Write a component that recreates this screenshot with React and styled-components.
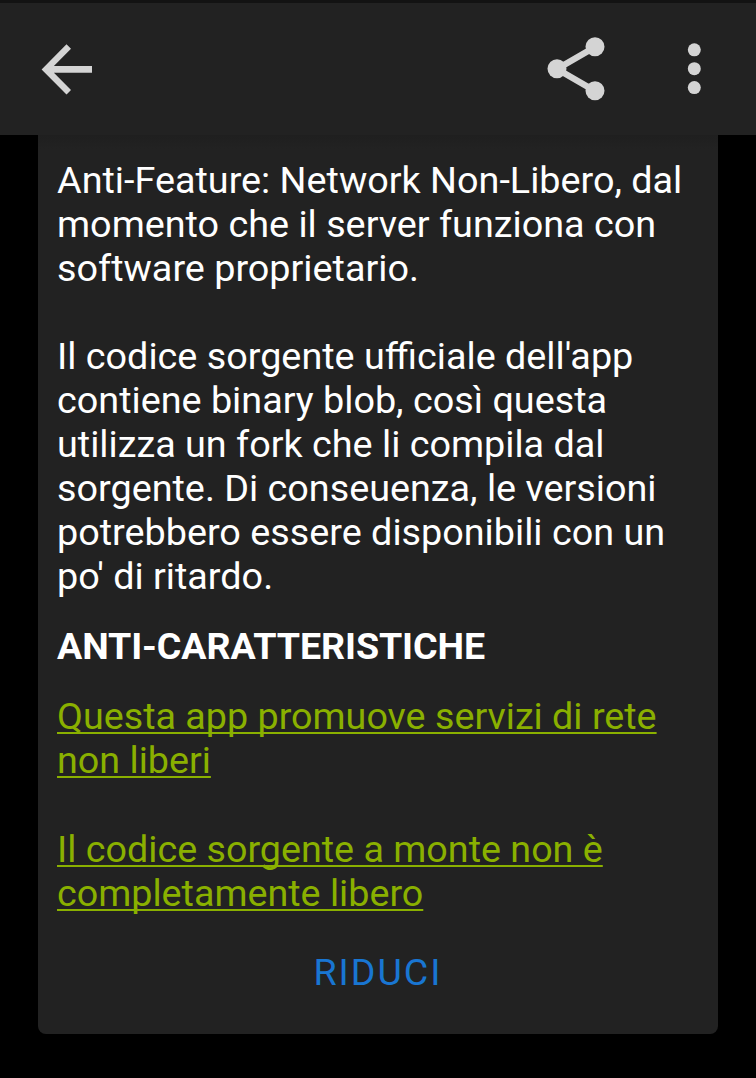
import React from "react";
import styled, { createGlobalStyle } from "styled-components";

const GlobalStyle = createGlobalStyle`
  * { box-sizing: border-box; }
  body { margin: 0; background: #000; font-family: Roboto, "Liberation Sans", sans-serif; }
`;
const Screen = styled.main`
  width: 756px;
  height: 1078px;
  overflow: hidden;
  background: #000;
`;
const Toolbar = styled.header`
  display: flex;
  align-items: center;
  height: 135px;
  padding: 0 55px 1px 41px;
  background: #222;
  border-top: 3px solid #131313;
`;
const IconButton = styled.button`
  display: flex;
  padding: 0;
  border: 0;
  background: none;
  margin-left: ${(p) => p.$gap || "0"};
`;
const Card = styled.article`
  display: flex;
  flex-direction: column;
  width: 680px;
  height: 899px;
  margin: 0 auto;
  padding: 22.5px 19px 0;
  border-radius: 0 0 8px 8px;
  background: linear-gradient(#1f1f1f, #222 14px);
`;
const Paragraph = styled.p`
  margin: 0 0 44px;
  color: #fff;
  font-size: 37.75px;
  line-height: 44.1px;
  white-space: nowrap;
`;
const Heading = styled.h2`
  margin: -18px 0 26px;
  color: #fff;
  font-size: 37.6px;
  letter-spacing: -0.1px;
  line-height: 44px;
  font-weight: 700;
`;
const FeatureLink = styled.a`
  display: block;
  margin-bottom: 44px;
  color: #8ab000;
  font-size: 37.7px;
  line-height: 44.1px;
  white-space: nowrap;
  text-decoration: underline;
  text-decoration-thickness: 2px;
  text-decoration-skip-ink: none;
  text-underline-offset: 3px;
`;
const Collapse = styled.button`
  align-self: center;
  margin-top: -9px;
  padding: 0;
  border: 0;
  background: none;
  color: #1976d2;
  font: 400 37.6px/44px Roboto, sans-serif;
  letter-spacing: 2px;
`;

export default function App() {
  return (
    <Screen>
      <GlobalStyle />
      <Toolbar>
        <IconButton aria-label="Indietro">
          <svg width="51" height="52" viewBox="0 0 51 52" fill="#d4d4d4">
            <path d="M51 23H12.9l17.1-17.3L25.5 1.2.6 26.4l24.9 25.2 4.5-4.5-17.1-17.3H51z" />
          </svg>
        </IconButton>
        <IconButton aria-label="Condividi" $gap="auto">
          <svg width="58" height="64" viewBox="0 0 58 64" fill="#d4d4d4">
            <path d="M48 10 10 32l38 22" fill="none" stroke="#d4d4d4" strokeWidth="6.3" />
            <circle cx="48" cy="9.7" r="9.5" /><circle cx="10" cy="31.7" r="9.5" /><circle cx="48" cy="53.7" r="9.5" />
          </svg>
        </IconButton>
        <IconButton aria-label="Altre opzioni" $gap="82px">
          <svg width="14" height="52" viewBox="0 0 14 52" fill="#d4d4d4">
            <circle cx="7.3" cy="6.8" r="6.5" /><circle cx="7.3" cy="25.7" r="6.5" /><circle cx="7.3" cy="44.6" r="6.5" />
          </svg>
        </IconButton>
      </Toolbar>
      <Card>
        <Paragraph>
          Anti-Feature: Network Non-Libero, dal<br />momento che il server funziona con<br />software proprietario.
        </Paragraph>
        <Paragraph>
          Il codice sorgente ufficiale dell'app<br />contiene binary blob, così questa<br />utilizza un fork che li compila dal<br />sorgente. Di conseuenza, le versioni<br />potrebbero essere disponibili con un<br />po' di ritardo.
        </Paragraph>
        <Heading>ANTI-CARATTERISTICHE</Heading>
        <FeatureLink>Questa app promuove servizi di rete<br />non liberi</FeatureLink>
        <FeatureLink>Il codice sorgente a monte non è<br />completamente libero</FeatureLink>
        <Collapse>RIDUCI</Collapse>
      </Card>
    </Screen>
  );
}
